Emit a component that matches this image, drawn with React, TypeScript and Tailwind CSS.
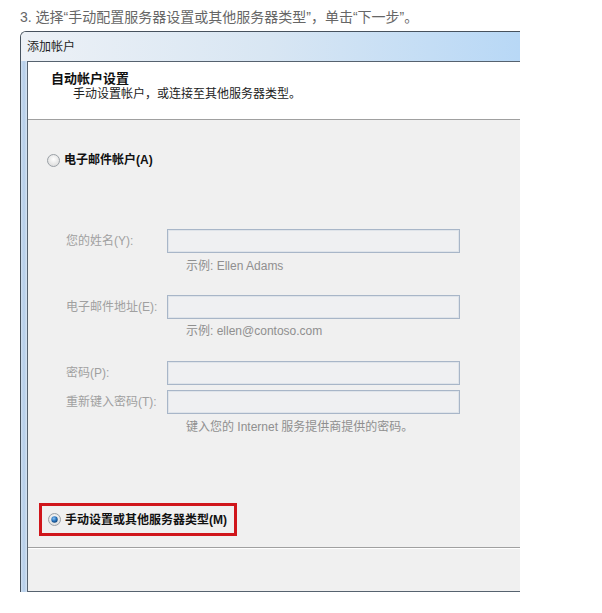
const font = { fontFamily: '"Liberation Sans", "Noto Sans CJK SC", sans-serif' };

const Radio = ({ checked }: { checked?: boolean }) => (
  <svg width="13" height="13" viewBox="0 0 13 13" className="shrink-0">
    <defs>
      <radialGradient id={checked ? "rc" : "ru"} cx="50%" cy="40%" r="60%">
        <stop offset="0%" stopColor="#ffffff" />
        <stop offset="100%" stopColor="#dcdcdc" />
      </radialGradient>
      <radialGradient id="dot" cx="40%" cy="35%" r="60%">
        <stop offset="0%" stopColor="#8fc4f2" />
        <stop offset="60%" stopColor="#2b78c2" />
        <stop offset="100%" stopColor="#154d86" />
      </radialGradient>
    </defs>
    <circle cx="6.5" cy="6.5" r="6" fill={checked ? "url(#rc)" : "url(#ru)"} stroke="#9aa0a6" strokeWidth="1" />
    {checked && <circle cx="6.5" cy="6.5" r="3.2" fill="url(#dot)" />}
  </svg>
);

const Field = ({ label, className }: { label: string; className?: string }) => (
  <div className={`flex items-center pl-[38px] ${className ?? ""}`}>
    <span className="w-[101px] text-[12px] leading-4 text-[#a0a0a0]">{label}</span>
    <div className="w-[293px] h-[24px] border border-[#a8b6c8] bg-[#eff0f2] shadow-[inset_0_0_0_1px_#dfe4ea]" />
  </div>
);

const Hint = ({ text, className }: { text: string; className?: string }) => (
  <div className={`pl-[158px] text-[12px] leading-4 text-[#8f8f8f] ${className ?? ""}`}>{text}</div>
);

export default function App() {
  return (
    <div className="w-[602px] h-[613px] bg-white overflow-hidden" style={font}>
      <p className="pt-[7px] pl-[20px] text-[14px] leading-5 text-[#666]">
        3. 选择“手动配置服务器设置或其他服务器类型”，单击“下一步”。
      </p>

      {/* dialog window */}
      <div className="mt-[4px] ml-[20px] w-[500px] h-[561px] flex flex-col border-l border-t border-[#47525e] rounded-tl-[6px] overflow-hidden">
        <div className="h-[29px] shrink-0 flex items-center pl-[6px] bg-linear-to-r from-[#edf1f6] via-[#d8e6f3] to-[#b8d8f6] text-[12px] text-[#1e1e1e]">
          添加帐户
        </div>

        <div className="flex flex-1">
          <div className="w-[6px] shrink-0 bg-linear-to-r from-[#cfdff1] via-[#b4cde9] to-[#d6e4f3]" />
          <div className="flex-1 flex flex-col border-l border-t border-b border-[#56626f]">
            {/* header */}
            <div className="h-[58px] shrink-0 bg-white pt-[9px] pl-[23px] border-b border-[#a0a0a0]">
              <div className="text-[13px] leading-4 font-bold text-[#111]">自动帐户设置</div>
              <div className="pl-[22px] text-[12px] leading-4 text-[#222] -mt-[1px]">
                手动设置帐户，或连接至其他服务器类型。
              </div>
            </div>

            {/* body */}
            <div className="h-[428px] shrink-0 bg-[#f0f0f0] flex flex-col border-b border-[#a0a0a0]">
              <div className="mt-[32px] pl-[19px] flex items-center gap-[4px] h-[16px]">
                <Radio />
                <span className="text-[12px] font-bold text-[#111]">电子邮件帐户(A)</span>
              </div>

              <Field label="您的姓名(Y):" className="mt-[61px]" />
              <Hint text="示例: Ellen Adams" className="mt-[5px]" />

              <Field label="电子邮件地址(E):" className="mt-[21px]" />
              <Hint text="示例: ellen@contoso.com" className="mt-[4px]" />

              <Field label="密码(P):" className="mt-[22px]" />
              <Field label="重新键入密码(T):" className="mt-[5px]" />
              <Hint text="键入您的 Internet 服务提供商提供的密码。" className="mt-[5px]" />

              <div className="mt-[68px] ml-[11px] w-[198px] h-[33px] border-[3px] border-[#d0161b] flex items-center pl-[6px] gap-[4px]">
                <Radio checked />
                <span className="text-[12px] font-bold text-[#111]">手动设置或其他服务器类型(M)</span>
              </div>
            </div>

            {/* footer */}
            <div className="flex-1 bg-[#f0f0f0] border-t border-white" />
          </div>
        </div>
      </div>
    </div>
  );
}
